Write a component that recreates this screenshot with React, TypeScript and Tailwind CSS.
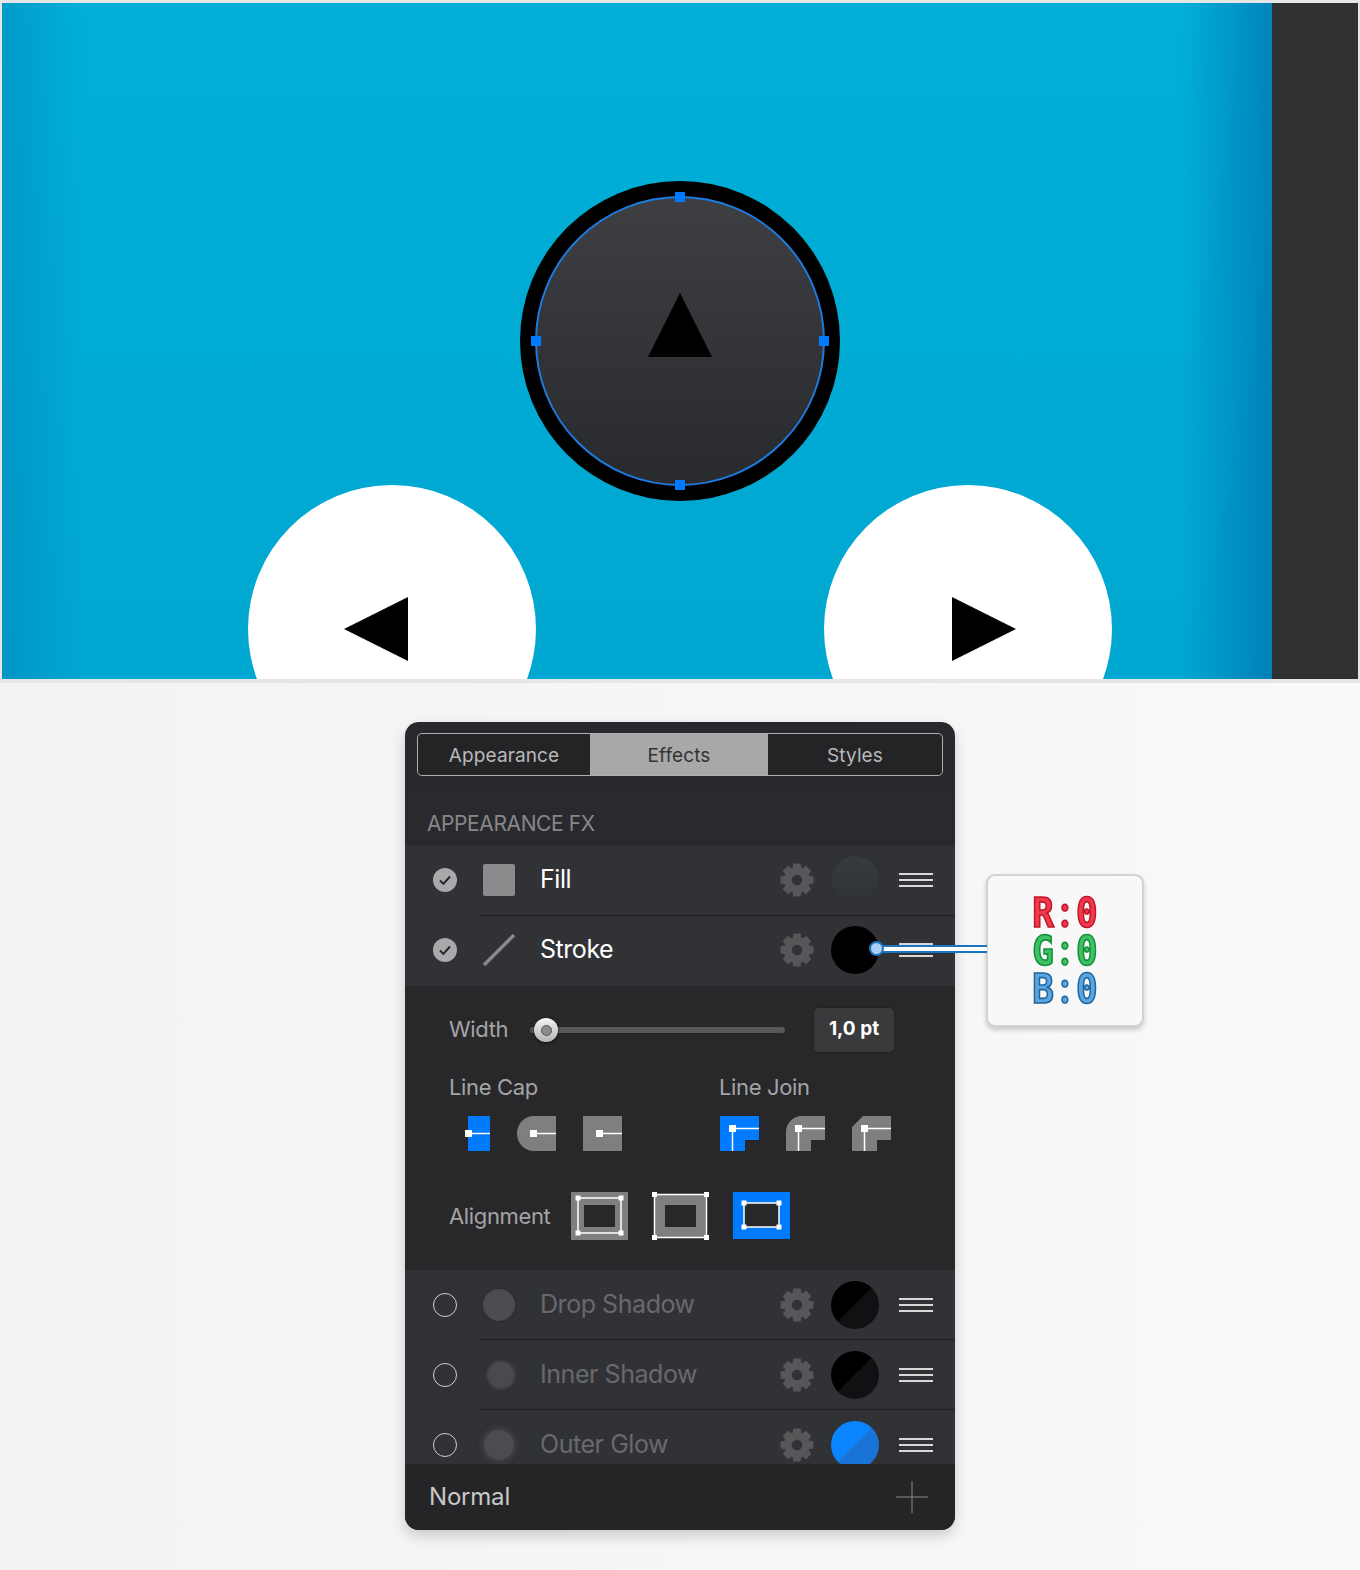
const uiFont = "font-['Inter','Liberation_Sans',sans-serif]";

function Gear() {
  const teeth = [0, 45, 90, 135, 180, 225, 270, 315];
  return (
    <svg viewBox="0 0 34 34" className="h-[34px] w-[34px] shrink-0">
      {teeth.map((deg) => (
        <path key={deg} d="M13.400 0.500h7.200l1.400 8h-10z" fill="#57575a" transform={`rotate(${deg} 17 17)`} />
      ))}
      <circle cx="17" cy="17" r="9" fill="none" stroke="#57575a" strokeWidth="7.500" />
    </svg>
  );
}

function Menu() {
  return (
    <div className="flex w-[34px] shrink-0 flex-col gap-[4px]">
      <div className="h-[2px] bg-[#d8d8d8]" />
      <div className="h-[2px] bg-[#d8d8d8]" />
      <div className="h-[2px] bg-[#d8d8d8]" />
    </div>
  );
}

function Check() {
  return (
    <svg viewBox="0 0 24 24" className="h-[24px] w-[24px]">
      <circle cx="12" cy="12" r="12" fill="#a9a9ab" />
      <path d="M7 12.500l3.400 3.400 6.600-7.400" fill="none" stroke="#26262a" strokeWidth="2" />
    </svg>
  );
}

type RowProps = {
  label: string;
  active?: boolean;
  icon: React.ReactNode;
  swatch: string;
  last?: boolean;
  clipped?: boolean;
};

function FxRow({ label, active, icon, swatch, last, clipped }: RowProps) {
  // active rows sit a touch higher than the disabled ones in the reference
  const cell = active ? "h-[67px]" : "h-[69px]";
  return (
    <div className={`relative flex shrink-0 items-start overflow-hidden bg-[#313236] pl-[28px] ${clipped ? "h-[54px]" : "h-[70px]"}`}>
      <div className={`flex w-[24px] shrink-0 items-center justify-center ${cell}`}>
        {active ? <Check /> : <div className="h-[24px] w-[24px] rounded-full border border-[#d0d0d0]" />}
      </div>
      <div className={`ml-[26px] flex w-[32px] shrink-0 items-center justify-center ${cell}`}>{icon}</div>
      <div className={`ml-[25px] flex w-[240px] shrink-0 items-center text-[25px] tracking-[-0.45px] ${cell} ${active ? "text-white" : "text-[#69696c]"}`}>
        {label}
      </div>
      <div className={`flex items-center ${cell}`}>
        <Gear />
      </div>
      <div className={`ml-[17px] flex items-center ${cell}`}>
        <div className={`h-[48px] w-[48px] rounded-full ${swatch}`} />
      </div>
      <div className={`ml-[20px] flex items-center ${cell}`}>
        <Menu />
      </div>
      {!last && <div className="absolute bottom-0 left-[75px] right-0 h-px bg-[#1f1f22]" />}
    </div>
  );
}

function ButtCap() {
  return (
    <svg viewBox="0 0 25 35" className="h-[35px] w-[25px] shrink-0">
      <path d="M3 0h22v35H3z" fill="#007aff" />
      <path d="M3 17.500h22" stroke="#fff" strokeWidth="1.500" />
      <rect x="0" y="14" width="7" height="7" fill="#fff" />
    </svg>
  );
}

function GreyCap({ round }: { round?: boolean }) {
  return (
    <svg viewBox="0 0 40 35" className="h-[35px] w-[40px] shrink-0">
      <path d={round ? "M40 0H18C8 0 1 8 1 17.500S8 35 18 35h22z" : "M1 0h39v35H1z"} fill="#7f7f7f" />
      <path d="M18 17.500h22" stroke="#fff" strokeWidth="1.500" />
      <rect x="14" y="14" width="7" height="7" fill="#fff" />
    </svg>
  );
}

function JoinIcon({ kind }: { kind: "miter" | "round" | "bevel" }) {
  const d =
    kind === "miter"
      ? "M0 0h39v24H25v11H0z"
      : kind === "round"
        ? "M0 35V16C0 7 7 0 16 0h23v24H25v11z"
        : "M0 35V11L11 0h28v24H25v11z";
  return (
    <svg viewBox="0 0 39 35" className="h-[35px] w-[39px] shrink-0">
      <path d={d} fill={kind === "miter" ? "#007aff" : "#7f7f7f"} />
      <path d="M12.500 35V12.500H39" fill="none" stroke="#fff" strokeWidth="1.500" />
      <rect x="9" y="9" width="7" height="7" fill="#fff" />
    </svg>
  );
}

function Handles({ x1, y1, x2, y2 }: { x1: number; y1: number; x2: number; y2: number }) {
  const pts = [
    [x1, y1],
    [x2, y1],
    [x1, y2],
    [x2, y2],
  ];
  return (
    <>
      <rect x={x1} y={y1} width={x2 - x1} height={y2 - y1} fill="none" stroke="#fff" strokeWidth="1.500" />
      {pts.map(([x, y]) => (
        <rect key={`${x}-${y}`} x={x - 2.500} y={y - 2.500} width="5" height="5" fill="#fff" />
      ))}
    </>
  );
}

function AlignIcons() {
  return (
    <div className="ml-[21px] flex items-start gap-[24px]">
      <svg viewBox="0 0 57 48" className="h-[48px] w-[57px] shrink-0">
        <rect width="57" height="48" fill="#7f7f7f" />
        <rect x="13" y="13" width="31" height="22" fill="#28282b" />
        <Handles x1={7} y1={6} x2={50} y2={41} />
      </svg>
      <svg viewBox="0 0 57 48" className="h-[48px] w-[57px] shrink-0">
        <rect x="2" y="2" width="53" height="44" fill="#7f7f7f" />
        <rect x="13" y="13" width="31" height="22" fill="#28282b" />
        <Handles x1={2.500} y1={2.500} x2={54.500} y2={45.500} />
      </svg>
      <svg viewBox="0 0 57 47" className="h-[47px] w-[57px] shrink-0">
        <rect width="57" height="47" fill="#007aff" />
        <rect x="11" y="11" width="35" height="24" fill="#28282b" />
        <Handles x1={11} y1={11} x2={46} y2={35} />
      </svg>
    </div>
  );
}

function Canvas() {
  return (
    <div className="flex h-[683px] bg-[#e4e6e8] pb-[4px] pl-[2px] pr-[2px] pt-[3px]">
      <div className="relative h-full w-[1270px] overflow-hidden bg-[linear-gradient(180deg,#00afd7,#00a7d1)]">
        <div className="absolute inset-y-0 left-0 w-[80px] bg-[linear-gradient(90deg,rgba(0,110,170,0.3),rgba(0,110,170,0))]" />
        <div className="absolute inset-y-0 right-0 w-[90px] bg-[linear-gradient(270deg,rgba(0,90,160,0.5),rgba(0,90,160,0))]" />

        <div className="absolute left-[518px] top-[178px] flex h-[320px] w-[320px] items-center justify-center rounded-full bg-black">
          <div className="h-[290px] w-[290px] rounded-full border-2 border-[#1d7be0] bg-[linear-gradient(180deg,#3e3f42,#292a2d)]" />
        </div>
        <div className="absolute left-[673px] top-[189px] h-[10px] w-[10px] bg-[#007aff]" />
        <div className="absolute left-[673px] top-[477px] h-[10px] w-[10px] bg-[#007aff]" />
        <div className="absolute left-[529px] top-[333px] h-[10px] w-[10px] bg-[#007aff]" />
        <div className="absolute left-[817px] top-[333px] h-[10px] w-[10px] bg-[#007aff]" />
        <svg viewBox="0 0 64 64" className="absolute left-[646px] top-[290px] h-[64px] w-[64px]">
          <path d="M32 0l32 64H0z" fill="#000" />
        </svg>

        <div className="absolute left-[246px] top-[482px] h-[288px] w-[288px] rounded-full bg-white" />
        <div className="absolute left-[822px] top-[482px] h-[288px] w-[288px] rounded-full bg-white" />
        <svg viewBox="0 0 64 64" className="absolute left-[342px] top-[594px] h-[64px] w-[64px]">
          <path d="M0 32L64 0v64z" fill="#000" />
        </svg>
        <svg viewBox="0 0 64 64" className="absolute left-[950px] top-[594px] h-[64px] w-[64px]">
          <path d="M64 32L0 0v64z" fill="#000" />
        </svg>
      </div>
      <div className="h-full flex-1 bg-[#303132]" />
    </div>
  );
}

function StrokeDetail() {
  return (
    <div className="h-[284px] bg-[#28282b] pl-[44px] pt-[21px] text-[#a4a4a6]">
      <div className="flex h-[46px] items-center">
        <div className="w-[81px] pb-[2px] text-[22px] tracking-[-0.35px]">Width</div>
        <div className="relative h-[6px] w-[255px] rounded-full bg-[#58585a]">
          <div className="absolute left-[4px] top-[-9px] flex h-[24px] w-[24px] items-center justify-center rounded-full bg-[linear-gradient(180deg,#f4f4f4,#b5b5b5)] shadow-[0_1px_3px_rgba(0,0,0,0.6)]">
            <div className="h-[11px] w-[11px] rounded-full border border-[#555] bg-[#8c8c8c]" />
          </div>
        </div>
        <div className="ml-[28px] flex h-[46px] w-[82px] items-center justify-center rounded-[6px] border border-[#222] bg-[#3a3a3c] pb-[2px] text-[19px] font-bold text-white">
          1,0 pt
        </div>
      </div>

      <div className="mt-[20px] flex">
        <div className="w-[270px]">
          <div className="h-[28px] text-[22px] leading-[28px] tracking-[-0.35px]">Line Cap</div>
          <div className="ml-[16px] mt-[15px] flex gap-[26px]">
            <ButtCap />
            <GreyCap round />
            <GreyCap />
          </div>
        </div>
        <div>
          <div className="h-[28px] text-[22px] leading-[28px] tracking-[-0.35px]">Line Join</div>
          <div className="ml-px mt-[15px] flex gap-[27px]">
            <JoinIcon kind="miter" />
            <JoinIcon kind="round" />
            <JoinIcon kind="bevel" />
          </div>
        </div>
      </div>

      <div className="mt-[41px] flex items-center">
        <div className="w-[101px] text-[22px] tracking-[-0.35px]">Alignment</div>
        <AlignIcons />
      </div>
    </div>
  );
}

function RgbCallout() {
  const lines = [
    { head: "R", cls: "text-[#ee3b4c] [-webkit-text-stroke:1.5px_#c4152a]" },
    { head: "G", cls: "text-[#3fc063] [-webkit-text-stroke:1.5px_#15903f]" },
    { head: "B", cls: "text-[#5ba6e0] [-webkit-text-stroke:1.5px_#20679f]" },
  ];
  return (
    <>
      <div className="absolute left-[877px] top-[262px] z-10 h-[8px] w-[110px] border-y-2 border-[#1b74bd] bg-white" />
      <div className="absolute left-[869px] top-[258px] z-10 h-[15px] w-[15px] rounded-full border-2 border-[#1b74bd] bg-[#aacdf3]" />
      <div className="absolute left-[986px] top-[191px] flex h-[153px] w-[158px] flex-col items-center justify-center gap-[5px] rounded-[9px] border-2 border-[#d2d2d2] bg-[#f8f8f8] shadow-[0_3px_5px_rgba(0,0,0,0.2)]">
        {lines.map((line) => (
          <div key={line.head} className={`flex h-[33px] scale-y-115 font-['DejaVu_Sans_Mono',monospace] text-[36px] font-bold leading-[33px] ${line.cls}`}>
            <span>{line.head}</span>
            <span className="w-[22px] -translate-y-[2px] text-center font-['Lato',sans-serif] text-[38px]">:</span>
            <span>0</span>
          </div>
        ))}
      </div>
    </>
  );
}

function Panel() {
  return (
    <div className={`flex h-[808px] w-[550px] flex-col overflow-hidden rounded-[14px] bg-[#29292d] shadow-[0_6px_14px_rgba(0,0,0,0.18)] ${uiFont}`}>
      <div className="h-[68px] shrink-0 border-b border-[#252528] px-[12px] pt-[11px]">
        <div className="flex h-[43px] overflow-hidden rounded-[5px] border border-[#b0b0b0] bg-[#242427] text-[19px] tracking-[0.1px] text-[#b8b8ba]">
          <div className="flex w-[172px] items-center justify-center pt-[3px]">Appearance</div>
          <div className="flex w-[178px] items-center justify-center bg-[#a8a8a8] pt-[3px] text-[#333336]">Effects</div>
          <div className="flex flex-1 items-center justify-center pt-[3px]">Styles</div>
        </div>
      </div>
      <div className="flex h-[56px] shrink-0 items-end bg-[#2a2a2e] pb-[7px] pl-[22px] text-[21px] tracking-[-0.4px] text-[#87878a]">
        APPEARANCE FX
      </div>
      <FxRow
        label="Fill"
        active
        swatch="bg-[linear-gradient(180deg,#383b3e,#2f3134)] shadow-[0_0_2px_#26272a]"
        icon={<div className="h-[32px] w-[32px] rounded-[2px] bg-[#8b8b8d]" />}
      />
      <FxRow
        label="Stroke"
        active
        swatch="bg-black"
        last
        icon={
          <svg viewBox="0 0 32 32" className="h-[32px] w-[32px]">
            <path d="M1 31L31 1" stroke="#88888a" strokeWidth="3.500" />
          </svg>
        }
      />
      <StrokeDetail />
      <FxRow
        label="Drop Shadow"
        swatch="bg-[linear-gradient(135deg,#000_50%,#111113_50%)]"
        icon={<div className="h-[32px] w-[32px] rounded-full bg-[#4c4c50] shadow-[0_0_3px_#2a2a2c]" />}
      />
      <FxRow
        label="Inner Shadow"
        swatch="bg-[linear-gradient(135deg,#000_50%,#111113_50%)]"
        icon={<div className="ml-[3px] h-[28px] w-[28px] rounded-full bg-[#4a4a4e] blur-[1px]" />}
      />
      <FxRow
        label="Outer Glow"
        last
        clipped
        swatch="bg-[linear-gradient(135deg,#0a84ff_50%,#1a74d8_50%)]"
        icon={<div className="h-[30px] w-[30px] rounded-full bg-[#4c4c50] shadow-[0_0_5px_3px_#3f3f43]" />}
      />
      <div className="relative flex min-h-0 flex-1 items-center justify-between bg-[#252528] pl-[24px] pr-[27px]">
        <div className="text-[24px] tracking-[-0.2px] text-[#c8c8c8]">Normal</div>
        <svg viewBox="0 0 32 32" className="h-[32px] w-[32px]">
          <path d="M16 0v32M0 16h32" stroke="#8a8a8c" strokeWidth="1" />
        </svg>
      </div>
    </div>
  );
}

export default function App() {
  return (
    <div className="h-[1570px] w-[1360px] overflow-hidden bg-[linear-gradient(90deg,#f3f3f3,#f9f9f9)]">
      <Canvas />
      <div className="relative flex justify-center pt-[39px]">
        <Panel />
        <RgbCallout />
      </div>
    </div>
  );
}
